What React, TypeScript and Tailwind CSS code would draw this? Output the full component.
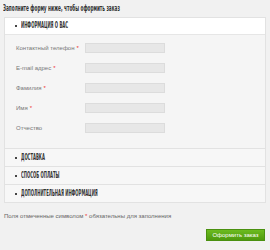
import React from "react";

const head = { fontFamily: '"DejaVu Sans Condensed", "Liberation Sans", sans-serif' };
const body = { fontFamily: '"Liberation Sans", Arial, sans-serif' };

const fields = [
  { label: "Контактный телефон", req: true },
  { label: "E-mail адрес", req: true },
  { label: "Фамилия", req: true },
  { label: "Имя", req: true },
  { label: "Отчество", req: false },
];

const collapsed = ["ДОСТАВКА", "СПОСОБ ОПЛАТЫ", "ДОПОЛНИТЕЛЬНАЯ ИНФОРМАЦИЯ"];

function Bullet() {
  return <span className="inline-block w-[2px] h-[2px] bg-[#444] mr-[4px]" />;
}

function Narrow({ children }: { children: React.ReactNode }) {
  return (
    <span className="inline-block origin-left scale-x-[0.47] whitespace-nowrap" style={head}>
      {children}
    </span>
  );
}

export default function App() {
  return (
    <div className="w-[270px] h-[250px] bg-[#f1f1f1] overflow-hidden" style={body}>
      {/* заголовок */}
      <div className="pl-[3px] pt-[3px] h-[17px] text-[9px] leading-[10px] font-semibold text-[#333]">
        <span className="inline-block origin-left scale-x-[0.52] whitespace-nowrap" style={head}>
          Заполните форму ниже, чтобы оформить заказ
        </span>
      </div>

      <div className="ml-[4px] mr-[4px] border border-[#e2e2e2] bg-[#f5f5f5]">
        <div className="h-[17px] bg-white border-b border-[#e6e6e6] flex items-center pl-[10px] text-[9px] font-bold text-[#333]">
          <Bullet />
          <Narrow>ИНФОРМАЦИЯ О ВАС</Narrow>
        </div>
        <div className="pt-[8px] pb-[15px] flex flex-col gap-[10px]">
          {fields.map((f) => (
            <div key={f.label} className="flex items-center h-[10px]">
              <div className="w-[80px] pl-[11px] text-[6px] text-[#777] leading-none whitespace-nowrap">
                {f.label}
                {f.req && <span className="text-[#e33] ml-[2px]">*</span>}
              </div>
              <div className="w-[80px] h-[10px] bg-[#e7e7e7] border border-[#dcdcdc]" />
            </div>
          ))}
        </div>
      </div>

      {collapsed.map((t) => (
        <div
          key={t}
          className="ml-[4px] mr-[4px] h-[18px] border border-t-0 border-[#e2e2e2] bg-[#f7f7f7] flex items-center pl-[10px] text-[9px] font-bold text-[#333]"
        >
          <Bullet />
          <Narrow>{t}</Narrow>
        </div>
      ))}

      <div className="pl-[4px] pt-[10px] text-[6px] text-[#666] leading-none whitespace-nowrap">
        Поля отмеченные символом <span className="text-[#e33]">*</span> обязательны для заполнения
      </div>

      <div className="flex justify-end pr-[5px] pt-[10px]">
        <button className="w-[59px] h-[12px] bg-gradient-to-b from-[#6cbb1f] to-[#4e9a0c] border border-[#4a9010] text-white text-[6px] leading-none">
          Оформить заказ
        </button>
      </div>
    </div>
  );
}
